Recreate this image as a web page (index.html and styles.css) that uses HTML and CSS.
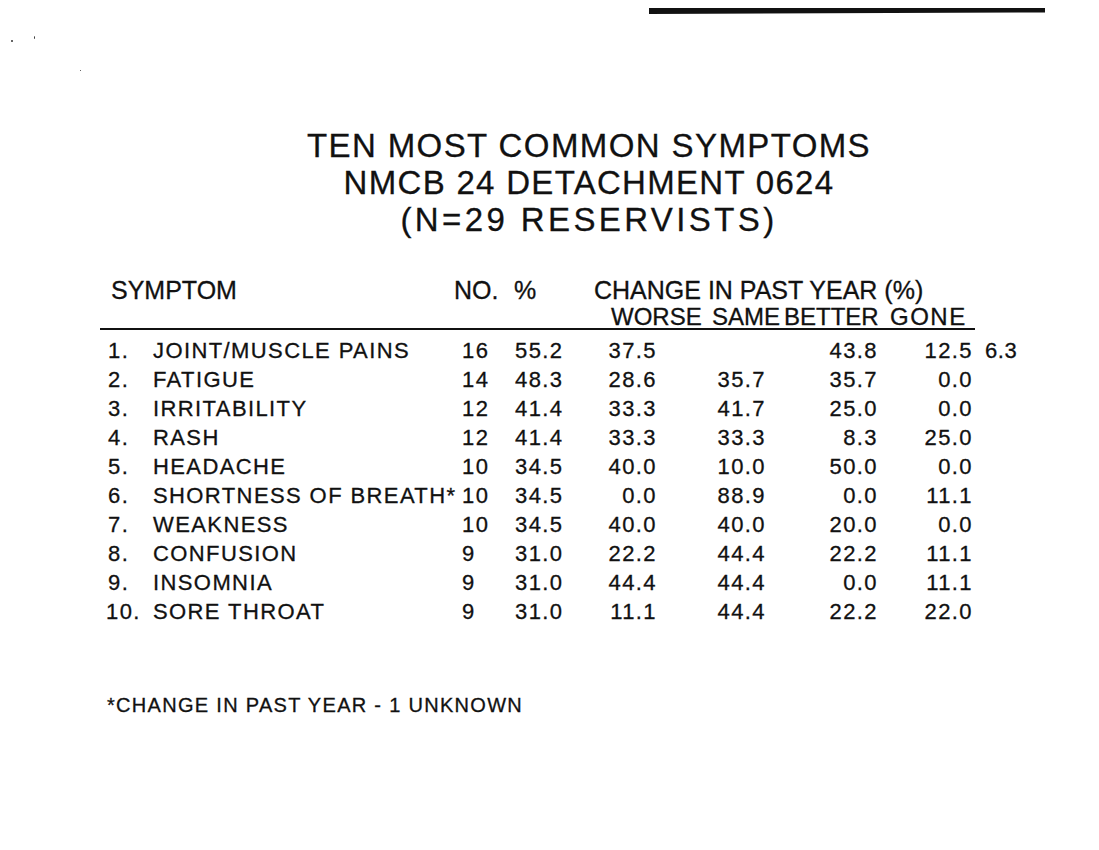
FILE: index.html
```html
<!DOCTYPE html>
<html lang="en">
<head>
<meta charset="utf-8">
<title>Ten Most Common Symptoms</title>
<link rel="stylesheet" href="styles.css">
</head>
<body>
<div class="page">
  <span class="speck speck-a"></span>
  <span class="speck speck-b"></span>
  <span class="speck speck-c"></span>
  <div class="topbar"></div>

  <header class="title">
    <div class="title-1">TEN MOST COMMON SYMPTOMS</div>
    <div class="title-2">NMCB 24 DETACHMENT 0624</div>
    <div class="title-n">(N=29 RESERVISTS)</div>
  </header>

  <section class="table">
    <div class="head1">
      <span class="h-sym">SYMPTOM</span>
      <span class="h-no">NO.</span>
      <span class="h-pct">%</span>
      <span class="h-chg">CHANGE IN PAST YEAR (%)</span>
    </div>
    <div class="head2">
      <span></span>
      <span>WORSE</span>
      <span>SAME</span>
      <span>BETTER</span>
      <span class="h-gone">GONE</span>
    </div>

    <div class="rows">
      <div class="row"><span class="idx">1.</span><span class="name">JOINT/MUSCLE PAINS</span><span class="no">16</span><span class="pct">55.2</span><span class="num">37.5</span><span class="num"></span><span class="num">43.8</span><span class="num">12.5</span><span class="extra">6.3</span></div>
      <div class="row"><span class="idx">2.</span><span class="name">FATIGUE</span><span class="no">14</span><span class="pct">48.3</span><span class="num">28.6</span><span class="num">35.7</span><span class="num">35.7</span><span class="num">0.0</span><span class="extra"></span></div>
      <div class="row"><span class="idx">3.</span><span class="name">IRRITABILITY</span><span class="no">12</span><span class="pct">41.4</span><span class="num">33.3</span><span class="num">41.7</span><span class="num">25.0</span><span class="num">0.0</span><span class="extra"></span></div>
      <div class="row"><span class="idx">4.</span><span class="name">RASH</span><span class="no">12</span><span class="pct">41.4</span><span class="num">33.3</span><span class="num">33.3</span><span class="num">8.3</span><span class="num">25.0</span><span class="extra"></span></div>
      <div class="row"><span class="idx">5.</span><span class="name">HEADACHE</span><span class="no">10</span><span class="pct">34.5</span><span class="num">40.0</span><span class="num">10.0</span><span class="num">50.0</span><span class="num">0.0</span><span class="extra"></span></div>
      <div class="row"><span class="idx">6.</span><span class="name">SHORTNESS OF BREATH*</span><span class="no">10</span><span class="pct">34.5</span><span class="num">0.0</span><span class="num">88.9</span><span class="num">0.0</span><span class="num">11.1</span><span class="extra"></span></div>
      <div class="row"><span class="idx">7.</span><span class="name">WEAKNESS</span><span class="no">10</span><span class="pct">34.5</span><span class="num">40.0</span><span class="num">40.0</span><span class="num">20.0</span><span class="num">0.0</span><span class="extra"></span></div>
      <div class="row"><span class="idx">8.</span><span class="name">CONFUSION</span><span class="no">9</span><span class="pct">31.0</span><span class="num">22.2</span><span class="num">44.4</span><span class="num">22.2</span><span class="num">11.1</span><span class="extra"></span></div>
      <div class="row"><span class="idx">9.</span><span class="name">INSOMNIA</span><span class="no">9</span><span class="pct">31.0</span><span class="num">44.4</span><span class="num">44.4</span><span class="num">0.0</span><span class="num">11.1</span><span class="extra"></span></div>
      <div class="row"><span class="idx idx-wide">10.</span><span class="name">SORE THROAT</span><span class="no">9</span><span class="pct">31.0</span><span class="num">11.1</span><span class="num">44.4</span><span class="num">22.2</span><span class="num">22.0</span><span class="extra"></span></div>
    </div>
  </section>

  <p class="footnote">*CHANGE IN PAST YEAR - 1 UNKNOWN</p>
</div>
</body>
</html>
```

FILE: styles.css
```css
html, body {
  margin: 0;
  padding: 0;
  background: #ffffff;
}

body {
  font-family: "Liberation Sans", Arial, Helvetica, sans-serif;
  color: #111111;
  -webkit-text-stroke: 0.3px #111111;
  width: 1099px;
  height: 850px;
  overflow: hidden;
}

.page {
  position: relative;
  padding-top: 8px;
}

/* scan specks */
.speck {
  position: absolute;
  background: #333;
  border-radius: 50%;
}
.speck-a { left: 11px; top: 40px; width: 2px; height: 2px; }
.speck-b { left: 34px; top: 36px; width: 1px; height: 3px; }
.speck-c { left: 80px; top: 70px; width: 1px; height: 1px; }

.topbar {
  margin-left: 649px;
  width: 396px;
  height: 6px;
  background: #111111;
  clip-path: polygon(0 0, 100% 0, 100% 75%, 0 100%);
}

.title {
  margin-top: 113px;
  padding-left: 79px;
  text-align: center;
  font-size: 33px;
  line-height: 37px;
}

.title-1 { letter-spacing: 1.4px; }
.title-2 { letter-spacing: 1.3px; }
.title-n { letter-spacing: 3.4px; }

.table {
  padding-left: 100px;
}

.head1 {
  margin-top: 39px;
  display: grid;
  grid-template-columns: 354px 60px 80px auto;
  font-size: 25px;
  line-height: 26px;
}
.h-sym { padding-left: 11px; }

.head2 {
  display: grid;
  grid-template-columns: 511px 101px 72px 106px auto;
  width: 875px;
  font-size: 24px;
  line-height: 22px;
  padding-top: 3px;
  border-bottom: 2px solid #111111;
}
.h-gone { letter-spacing: 1.5px; }

.rows {
  margin-top: 6px;
}

.row {
  display: grid;
  grid-template-columns: 53px 309px 53px 52px 90px 109px 112px 95px auto;
  font-size: 22px;
  line-height: 29px;
  letter-spacing: 1.4px;
  white-space: nowrap;
}

.idx { padding-left: 8px; }
.idx-wide { padding-left: 6px; }
.num { text-align: right; }
.extra { padding-left: 12px; letter-spacing: 0.6px; }

.footnote {
  margin: 67px 0 0 107px;
  font-size: 20px;
  line-height: 24px;
  letter-spacing: 1.3px;
}
```
